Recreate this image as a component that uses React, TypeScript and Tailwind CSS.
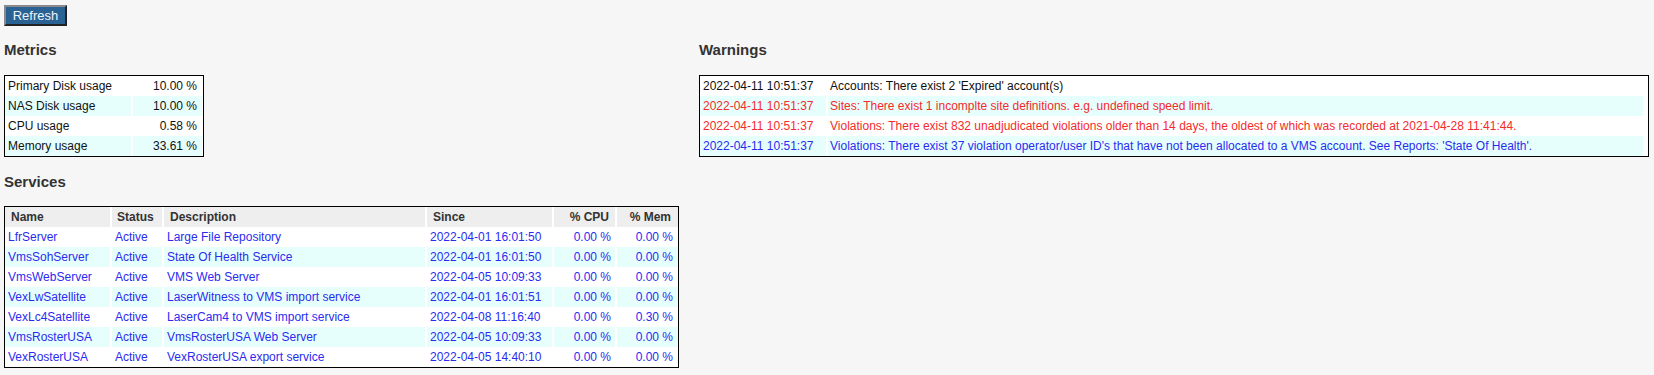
import React from "react";

const metrics = [
  { label: "Primary Disk usage", value: "10.00 %" },
  { label: "NAS Disk usage", value: "10.00 %" },
  { label: "CPU usage", value: "0.58 %" },
  { label: "Memory usage", value: "33.61 %" },
];

const services = [
  { name: "LfrServer", status: "Active", desc: "Large File Repository", since: "2022-04-01 16:01:50", cpu: "0.00 %", mem: "0.00 %" },
  { name: "VmsSohServer", status: "Active", desc: "State Of Health Service", since: "2022-04-01 16:01:50", cpu: "0.00 %", mem: "0.00 %" },
  { name: "VmsWebServer", status: "Active", desc: "VMS Web Server", since: "2022-04-05 10:09:33", cpu: "0.00 %", mem: "0.00 %" },
  { name: "VexLwSatellite", status: "Active", desc: "LaserWitness to VMS import service", since: "2022-04-01 16:01:51", cpu: "0.00 %", mem: "0.00 %" },
  { name: "VexLc4Satellite", status: "Active", desc: "LaserCam4 to VMS import service", since: "2022-04-08 11:16:40", cpu: "0.00 %", mem: "0.30 %" },
  { name: "VmsRosterUSA", status: "Active", desc: "VmsRosterUSA Web Server", since: "2022-04-05 10:09:33", cpu: "0.00 %", mem: "0.00 %" },
  { name: "VexRosterUSA", status: "Active", desc: "VexRosterUSA export service", since: "2022-04-05 14:40:10", cpu: "0.00 %", mem: "0.00 %" },
];

const warnings = [
  { time: "2022-04-11 10:51:37", text: "Accounts: There exist 2 'Expired' account(s)", color: "text-[#111]" },
  { time: "2022-04-11 10:51:37", text: "Sites: There exist 1 incomplte site definitions. e.g. undefined speed limit.", color: "text-[#f52a2a]" },
  { time: "2022-04-11 10:51:37", text: "Violations: There exist 832 unadjudicated violations older than 14 days, the oldest of which was recorded at 2021-04-28 11:41:44.", color: "text-[#f52a2a]" },
  { time: "2022-04-11 10:51:37", text: "Violations: There exist 37 violation operator/user ID's that have not been allocated to a VMS account. See Reports: 'State Of Health'.", color: "text-[#2b2bf0]" },
];

const rowBg = (i: number) => (i % 2 === 0 ? "bg-white" : "bg-[#e6fffd]");

export default function App() {
  return (
    <div className="min-h-screen bg-[#f6f6f6] px-1 pt-[5px] font-['Liberation_Sans',Arial,sans-serif] text-[12px]">
      <button className="h-[21px] w-[63px] border-2 border-t-[#8a8a8a] border-l-[#8a8a8a] border-r-[#222] border-b-[#222] bg-[#2a6294] text-[13px] leading-none text-[#eef3f8]">
        Refresh
      </button>

      <div className="mt-[15px] flex">
        <div className="w-[695px]">
          <h2 className="text-[15px] font-bold leading-[18px] text-[#333]">Metrics</h2>
          <div className="mt-4 w-[200px] border border-black bg-white pr-[3px]">
            {metrics.map((m, i) => (
              <div key={m.label} className="grid grid-cols-[126px_69px] gap-x-[2px] leading-[20px] text-[#111]">
                <div className={`${rowBg(i)} pl-[3px]`}>{m.label}</div>
                <div className={`${rowBg(i)} pr-[5px] text-right`}>{m.value}</div>
              </div>
            ))}
          </div>

          <h2 className="mt-[16px] text-[15px] font-bold leading-[18px] text-[#333]">Services</h2>
          <div className="mt-[15px] w-[675px] border border-black bg-white">
            <div className="grid grid-cols-[105px_50px_261px_125px_61px_61px] gap-x-[2px] font-bold leading-[20px] text-[#333]">
              <div className="bg-[#eeeeee] pl-[6px]">Name</div>
              <div className="bg-[#eeeeee] pl-[5px]">Status</div>
              <div className="bg-[#eeeeee] pl-[6px]">Description</div>
              <div className="bg-[#eeeeee] pl-[6px]">Since</div>
              <div className="bg-[#eeeeee] pr-[6px] text-right">% CPU</div>
              <div className="bg-[#eeeeee] pr-[7px] text-right">% Mem</div>
            </div>
            {services.map((s, i) => (
              <div key={s.name} className="grid grid-cols-[105px_50px_261px_125px_61px_61px] gap-x-[2px] leading-[20px] text-[#2b2bf0]">
                <div className={`${rowBg(i)} pl-[3px]`}>{s.name}</div>
                <div className={`${rowBg(i)} pl-[3px]`}>{s.status}</div>
                <div className={`${rowBg(i)} pl-[3px]`}>{s.desc}</div>
                <div className={`${rowBg(i)} pl-[3px]`}>{s.since}</div>
                <div className={`${rowBg(i)} pr-[4px] text-right`}>{s.cpu}</div>
                <div className={`${rowBg(i)} pr-[5px] text-right`}>{s.mem}</div>
              </div>
            ))}
          </div>
        </div>

        <div className="w-[950px]">
          <h2 className="text-[15px] font-bold leading-[18px] text-[#333]">Warnings</h2>
          <div className="mt-4 border border-black bg-white pr-[5px]">
            {warnings.map((w, i) => (
              <div key={i} className={`grid grid-cols-[126px_1fr] gap-x-[2px] leading-[20px] ${w.color}`}>
                <div className={`${rowBg(i)} pl-[3px]`}>{w.time}</div>
                <div className={`${rowBg(i)} pl-[2px]`}>{w.text}</div>
              </div>
            ))}
          </div>
        </div>
      </div>
    </div>
  );
}
